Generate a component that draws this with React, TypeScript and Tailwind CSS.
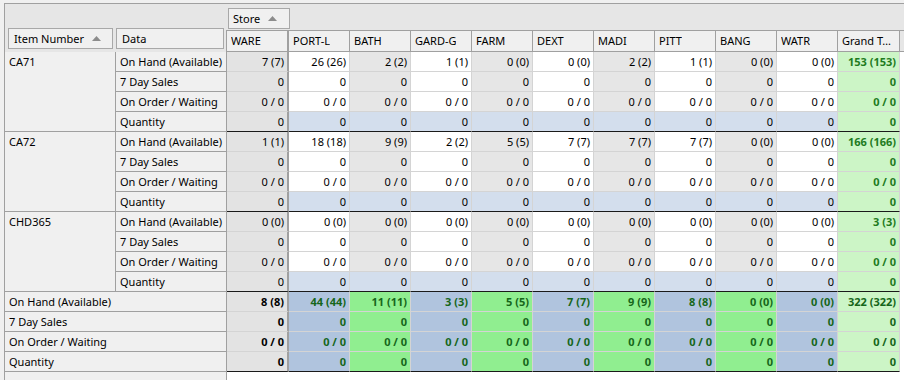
import React from 'react';

const columns = ['WARE', 'PORT-L', 'BATH', 'GARD-G', 'FARM', 'DEXT', 'MADI', 'PITT', 'BANG', 'WATR', 'Grand Total'];
const labels = ['On Hand (Available)', '7 Day Sales', 'On Order / Waiting', 'Quantity'];

const items = [
  { name: 'CA71', onHand: ['7 (7)', '26 (26)', '2 (2)', '1 (1)', '0 (0)', '0 (0)', '2 (2)', '1 (1)', '0 (0)', '0 (0)', '153 (153)'] },
  { name: 'CA72', onHand: ['1 (1)', '18 (18)', '9 (9)', '2 (2)', '5 (5)', '7 (7)', '7 (7)', '7 (7)', '0 (0)', '0 (0)', '166 (166)'] },
  { name: 'CHD365', onHand: ['0 (0)', '0 (0)', '0 (0)', '0 (0)', '0 (0)', '0 (0)', '0 (0)', '0 (0)', '0 (0)', '0 (0)', '3 (3)'] },
];
const totals = ['8 (8)', '44 (44)', '11 (11)', '3 (3)', '5 (5)', '7 (7)', '9 (9)', '8 (8)', '0 (0)', '0 (0)', '322 (322)'];

const rowValue = (row: number, onHand: string[], col: number) =>
  row === 0 ? onHand[col] : row === 2 ? '0 / 0' : '0';

const SortArrow = () => (
  <svg width="9" height="5" viewBox="0 0 9 5" className="ml-[8px] shrink-0">
    <path d="M0 5 L4.5 0 L9 5 Z" fill="#8c8c8c" />
  </svg>
);

// width + right border for each value column
const colWidth = (i: number) =>
  i === 0
    ? 'w-[62px] border-r-2 border-r-[#a0a0a0]'
    : i === 10
    ? 'w-[62px] border-r border-r-[#d4d4d4]'
    : 'w-[61px] border-r border-r-[#d4d4d4]';

const bodyBg = (col: number, row: number) => {
  if (col === 0) return 'bg-[#e3e3e3] text-black';
  if (col === 10) return 'bg-[#ccf5c6] text-[#1e7b1e] font-bold';
  if (row === 3) return 'bg-[#d3deed] text-black';
  return col % 2 === 1 ? 'bg-white text-black' : 'bg-[#e6e6e6] text-black';
};

const totalBg = (col: number) => {
  if (col === 0) return 'bg-[#e3e3e3] text-black';
  if (col === 10) return 'bg-[#ccf5c6] text-[#16661a]';
  return col % 2 === 1 ? 'bg-[#b0c4de] text-[#16661a]' : 'bg-[#90ee90] text-[#16661a]';
};

function ValueRow({ values, bg, last }: { values: string[]; bg: (c: number) => string; last: boolean }) {
  return (
    <div className="flex">
      {values.map((v, c) => (
        <div
          key={c}
          className={`${colWidth(c)} ${bg(c)} h-[20px] flex items-center justify-end pr-[3px] whitespace-nowrap border-b ${
            last ? 'border-b-[#1a1a1a]' : 'border-b-[#d4d4d4]'
          }`}
        >
          {v}
        </div>
      ))}
    </div>
  );
}

export default function App() {
  return (
    <div className="w-[904px] h-[380px] overflow-hidden bg-[#f0f0f0] pt-[3px] pl-[4px] font-['Noto_Sans',sans-serif] text-[11px] text-black leading-[14px]">
      <div className="h-full border-l border-t border-[#a0a0a0] bg-white">
        {/* Header / grouping area */}
        <div className="flex h-[48px] bg-[#e6e6e6]">
          <div className="w-[221px] flex items-end gap-[3px] pl-[3px] pb-[3px]">
            <div className="w-[105px] h-[21px] border border-[#a8a8a8] bg-[#f0f0f0] flex items-center pl-[5px]">
              Item Number
              <SortArrow />
            </div>
            <div className="w-[108px] h-[21px] border border-[#a8a8a8] bg-[#f0f0f0] flex items-center pl-[5px]">Data</div>
          </div>
          <div className="flex-1 flex flex-col pt-[4px]">
            <div className="ml-[2px] w-[62px] h-[21px] border border-[#a8a8a8] bg-[#f0f0f0] flex items-center pl-[4px]">
              Store
              <SortArrow />
            </div>
            <div className="mt-[1px] h-[22px] flex border-t border-b border-l border-[#a0a0a0]">
              {columns.map((c, i) => (
                <div
                  key={c}
                  className={`${
                    i === 0 ? 'w-[62px] border-r-2' : i === 10 ? 'w-[62px] border-r' : 'w-[61px] border-r'
                  } border-[#a0a0a0] bg-[#f0f0f0] flex items-center pl-[4px] pr-[2px] min-w-0`}
                >
                  <span className="block overflow-hidden text-ellipsis whitespace-nowrap leading-[16px]">{c}</span>
                </div>
              ))}
              <div className="flex-1 bg-[#e6e6e6]" />
            </div>
          </div>
        </div>

        {/* Item groups */}
        {items.map((item) => (
          <div key={item.name} className="flex">
            <div className="w-[222px] flex bg-[#f0f0f0]">
              <div className="w-[111px] border-r border-b border-[#a0a0a0] pl-[4px]">
                <div className="h-[19px] flex items-center">{item.name}</div>
              </div>
              <div className="w-[111px] flex flex-col">
                {labels.map((l) => (
                  <div
                    key={l}
                    className="h-[20px] border-r border-b border-[#a0a0a0] pl-[4px] flex items-center whitespace-nowrap"
                  >
                    {l}
                  </div>
                ))}
              </div>
            </div>
            <div className="flex flex-col">
              {labels.map((l, r) => (
                <ValueRow
                  key={l}
                  values={columns.map((_, c) => rowValue(r, item.onHand, c))}
                  bg={(c) => bodyBg(c, r)}
                  last={r === 3}
                />
              ))}
            </div>
          </div>
        ))}

        {/* Grand totals */}
        <div className="flex">
          <div className="w-[222px] flex flex-col bg-[#f0f0f0]">
            {labels.map((l) => (
              <div key={l} className="h-[20px] border-r border-b border-[#a0a0a0] pl-[4px] flex items-center">
                {l}
              </div>
            ))}
          </div>
          <div className="flex flex-col font-bold">
            {labels.map((l, r) => (
              <ValueRow
                key={l}
                values={columns.map((_, c) => rowValue(r, totals, c))}
                bg={totalBg}
                last={r === 3}
              />
            ))}
          </div>
        </div>

        <div className="flex h-[20px]">
          <div className="w-[222px] bg-[#f0f0f0] border-r border-[#a0a0a0]" />
          <div className="flex-1 bg-white" />
        </div>
      </div>
    </div>
  );
}
